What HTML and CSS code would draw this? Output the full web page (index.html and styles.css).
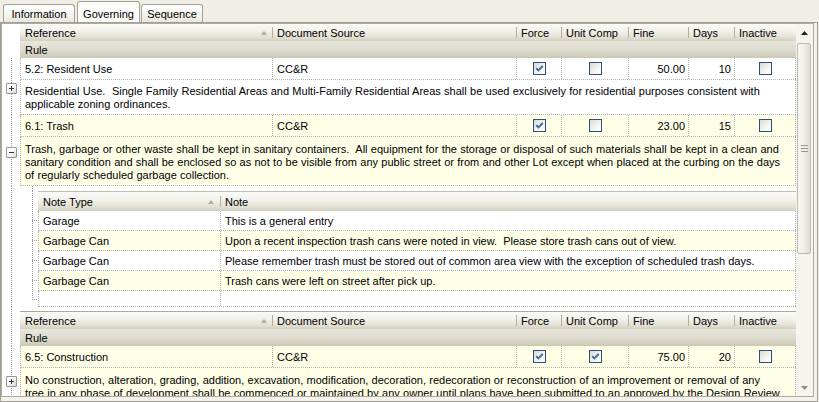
FILE: index.html
```html
<!DOCTYPE html>
<html lang="en">
<head>
<meta charset="utf-8">
<title>Governing</title>
<link rel="stylesheet" href="styles.css">
</head>
<body>
<div class="tabs">
  <div class="tab t-info">Information</div>
  <div class="tab t-gov">Governing</div>
  <div class="tab t-seq">Sequence</div>
</div>
<div class="panel">
  <div class="grid">
    <div class="gbody">

      <div class="line">
        <div class="gut blank"></div>
        <div class="hdr cols">
          <div class="hc first"><span>Reference</span><span class="sortup"></span></div>
          <div class="hc">Document Source</div>
          <div class="hc">Force</div>
          <div class="hc">Unit Comp</div>
          <div class="hc">Fine</div>
          <div class="hc">Days</div>
          <div class="hc last">Inactive</div>
        </div>
      </div>
      <div class="line">
        <div class="gut blank"></div>
        <div class="rule">Rule</div>
      </div>
      <div class="line">
        <div class="gut"></div>
        <div class="cells cols">
          <div class="c">5.2: Resident Use</div>
          <div class="c">CC&amp;R</div>
          <div class="c ctr"><span class="chk"><svg width="9" height="9" viewBox="0 0 9 9"><path d="M1.2 4.2 L3.4 6.4 L7.8 2" fill="none" stroke="#3a6cae" stroke-width="1.9"/></svg></span></div>
          <div class="c ctr"><span class="chk"></span></div>
          <div class="c num">50.00</div>
          <div class="c num">10</div>
          <div class="c ctr"><span class="chk"></span></div>
        </div>
      </div>
      <div class="line">
        <div class="gut"><span class="exp e1"><svg width="9" height="9" viewBox="0 0 9 9"><path d="M2 4.5h5M4.5 2v5" stroke="#333" stroke-width="1"/></svg></span></div>
        <div class="desc d1">Residential Use.&nbsp; Single Family Residential Areas and Multi-Family Residential Areas shall be used exclusively for residential purposes consistent with applicable zoning ordinances.</div>
      </div>
      <div class="line">
        <div class="gut"></div>
        <div class="cells cols alt">
          <div class="c">6.1: Trash</div>
          <div class="c">CC&amp;R</div>
          <div class="c ctr"><span class="chk"><svg width="9" height="9" viewBox="0 0 9 9"><path d="M1.2 4.2 L3.4 6.4 L7.8 2" fill="none" stroke="#3a6cae" stroke-width="1.9"/></svg></span></div>
          <div class="c ctr"><span class="chk"></span></div>
          <div class="c num">23.00</div>
          <div class="c num">15</div>
          <div class="c ctr"><span class="chk"></span></div>
        </div>
      </div>
      <div class="line">
        <div class="gut"><span class="exp"><svg width="9" height="9" viewBox="0 0 9 9"><path d="M2 4.5h5" stroke="#333" stroke-width="1"/></svg></span></div>
        <div class="desc alt">Trash, garbage or other waste shall be kept in sanitary containers.&nbsp; All equipment for the storage or disposal of such materials shall be kept in a clean and sanitary condition and shall be enclosed so as not to be visible from any public street or from and other Lot except when placed at the curbing on the days of regularly scheduled garbage collection.</div>
      </div>
      <div class="line">
        <div class="gut"></div>
        <div class="nest">
          <div class="nrow ntop"><div class="ngut"></div></div>
          <div class="nrow">
            <div class="ngut"></div>
            <div class="nhdr">
              <div class="hc first nfirst"><span>Note Type</span><span class="sortup"></span></div>
              <div class="hc last">Note</div>
            </div>
          </div>
          <div class="nrow">
            <div class="ngut tick"></div>
            <div class="ncells"><div class="c">Garage</div><div class="c">This is a general entry</div></div>
          </div>
          <div class="nrow">
            <div class="ngut tick"></div>
            <div class="ncells alt"><div class="c">Garbage Can</div><div class="c">Upon a recent inspection trash cans were noted in view.&nbsp; Please store trash cans out of view.</div></div>
          </div>
          <div class="nrow">
            <div class="ngut tick"></div>
            <div class="ncells"><div class="c">Garbage Can</div><div class="c">Please remember trash must be stored out of common area view with the exception of scheduled trash days.</div></div>
          </div>
          <div class="nrow">
            <div class="ngut tick"></div>
            <div class="ncells alt"><div class="c">Garbage Can</div><div class="c">Trash cans were left on street after pick up.</div></div>
          </div>
          <div class="nrow">
            <div class="ngut end"></div>
            <div class="ncells empty"><div class="c"></div><div class="c"></div></div>
          </div>
        </div>
      </div>
      <div class="line gap"><div class="gut"></div></div>

      <div class="line">
        <div class="gut"></div>
        <div class="hdr cols top">
          <div class="hc first"><span>Reference</span><span class="sortup"></span></div>
          <div class="hc">Document Source</div>
          <div class="hc">Force</div>
          <div class="hc">Unit Comp</div>
          <div class="hc">Fine</div>
          <div class="hc">Days</div>
          <div class="hc last">Inactive</div>
        </div>
      </div>
      <div class="line">
        <div class="gut"></div>
        <div class="rule">Rule</div>
      </div>
      <div class="line">
        <div class="gut"></div>
        <div class="cells cols alt">
          <div class="c">6.5: Construction</div>
          <div class="c">CC&amp;R</div>
          <div class="c ctr"><span class="chk"><svg width="9" height="9" viewBox="0 0 9 9"><path d="M1.2 4.2 L3.4 6.4 L7.8 2" fill="none" stroke="#3a6cae" stroke-width="1.9"/></svg></span></div>
          <div class="c ctr"><span class="chk"><svg width="9" height="9" viewBox="0 0 9 9"><path d="M1.2 4.2 L3.4 6.4 L7.8 2" fill="none" stroke="#3a6cae" stroke-width="1.9"/></svg></span></div>
          <div class="c num">75.00</div>
          <div class="c num">20</div>
          <div class="c ctr"><span class="chk"></span></div>
        </div>
      </div>
      <div class="line">
        <div class="gut"><span class="exp e3"><svg width="9" height="9" viewBox="0 0 9 9"><path d="M2 4.5h5M4.5 2v5" stroke="#333" stroke-width="1"/></svg></span></div>
        <div class="desc alt">No construction, alteration, grading, addition, excavation, modification, decoration, redecoration or reconstruction of an improvement or removal of any tree in any phase of development shall be commenced or maintained by any owner until plans have been submitted to an approved by the Design Review Committee.</div>
      </div>

    </div>
    <div class="vscroll">
      <div class="sbtn up"><svg width="7" height="4" viewBox="0 0 7 4"><path d="M0 4 L3.5 0 L7 4Z" fill="#222"/></svg></div>
      <div class="strack"><div class="thumb"><span class="grip"></span></div></div>
      <div class="sbtn"><svg width="7" height="4" viewBox="0 0 7 4"><path d="M0 0 L3.5 4 L7 0Z" fill="#8e8c82"/></svg></div>
    </div>
  </div>
</div>
</body>
</html>
```

FILE: styles.css
```css
* { box-sizing: border-box; margin: 0; padding: 0; }
html, body { width: 819px; height: 402px; overflow: hidden; }
body {
  background: #f0eee6;
  font-family: "Liberation Sans", Arial, sans-serif;
  font-size: 11px;
  line-height: 13px;
  color: #000;
}

/* tabs */
.tabs { display: flex; align-items: flex-end; height: 22px; padding-left: 3px; }
.tab {
  height: 18px;
  padding-top: 1px;
  border: 1px solid #a4a296;
  border-bottom: none;
  border-radius: 3px 3px 0 0;
  background: linear-gradient(#ffffff, #f6f5f1 50%, #e9e7de);
  display: flex; align-items: center; justify-content: center;
  white-space: nowrap;
}
.t-info { width: 72px; }
.t-gov { width: 63px; height: 21px; margin-left: 2px; padding-top: 4px; background: #fbfbf9; }
.t-seq { width: 62px; margin-left: 1px; }

/* panel + grid frame */
.panel {
  width: 818px; height: 380px;
  border: 1px solid #a19f93;
  padding: 0 3px 4px 0;
  background: #f3f2ec;
}
.grid { height: 100%; border: 1px solid #aeab9e; display: flex; background: #fff; }
.gbody { width: 794px; flex: none; overflow: hidden; display: flex; flex-direction: column; background: #fff; }

.line { display: flex; flex: none; }
.gap { height: 4px; }
.gut {
  width: 18px; flex: none; display: block;
  background: repeating-linear-gradient(#9c9c9c 0 1px, transparent 1px 2px) 9px 0 / 1px 100% no-repeat;
}
.gut.blank { background: none; }

/* headers */
.hdr {
  width: 776px; height: 17px;
  display: grid;
  grid-template-columns: 253px 244px 45px 67px 60px 46px 61px;
  background: linear-gradient(#fbfbf8 0%, #f2f1eb 40%, #e4e2d6 75%, #d3d0be 100%);
}
.hdr.top { height: 18px; border-top: 1px solid #aaa796; }
.hc {
  display: flex; align-items: center;
  padding-left: 4px; padding-top: 2px;
  white-space: nowrap; overflow: hidden;
  background: linear-gradient(#b2af9d, #b2af9d) right center / 1px 11px no-repeat;
}
.hc.first { padding-left: 5px; padding-right: 6px; justify-content: space-between; }
.hc.last { background: none; }
.sortup {
  width: 0; height: 0;
  margin-top: -2px;
  border-left: 3px solid transparent;
  border-right: 3px solid transparent;
  border-bottom: 4px solid #b0ad9e;
}
.rule {
  width: 776px; height: 17px;
  padding-left: 5px; padding-top: 2px;
  display: flex; align-items: center;
  background: linear-gradient(#e8e7de 0%, #dedccf 50%, #cbc8b4 100%);
}

/* data rows */
.cells {
  width: 776px; height: 22px;
  display: grid;
  grid-template-columns: 252px 244px 45px 67px 60px 46px 61px;
  border-left: 1px dotted #b3b3b3;
  border-bottom: 1px dotted #b3b3b3;
}
.alt { background: #ffffe8; }
.c {
  border-right: 1px dotted #b3b3b3;
  display: flex; align-items: center;
  padding-left: 4px; padding-top: 2px;
  white-space: nowrap; overflow: hidden;
}
.ctr { justify-content: center; padding-left: 0; padding-top: 0; }
.num { justify-content: flex-end; padding-left: 0; padding-right: 3px; }
.chk {
  width: 13px; height: 13px;
  border: 1px solid #2a4f78;
  background: linear-gradient(135deg, #dcdcd4, #f4f4f0 60%, #ffffff);
  display: flex; align-items: center; justify-content: center;
}

.desc {
  width: 776px;
  border-left: 1px dotted #b3b3b3;
  border-right: 1px dotted #b3b3b3;
  border-bottom: 1px dotted #b3b3b3;
  padding: 6px 14px 3px 4px;
  word-spacing: 0.25px;
}
.desc.d1 { padding-top: 5px; padding-bottom: 3px; }

.exp {
  display: flex; align-items: center; justify-content: center;
  width: 11px; height: 11px;
  margin: 10px 0 0 4px;
  border: 1px solid #959595;
  border-radius: 1px;
  background: linear-gradient(135deg, #ffffff 35%, #dad8ce);
}
.exp.e1 { margin-top: 3px; }
.exp.e3 { margin-top: 8px; }

/* nested band */
.nest { width: 776px; display: flex; flex-direction: column; }
.nrow { display: flex; }
.ntop { height: 5px; }
.ngut {
  width: 18px; flex: none;
  background: repeating-linear-gradient(#9c9c9c 0 1px, transparent 1px 2px) 12px 0 / 1px 100% no-repeat;
}
.ngut.tick {
  background:
    repeating-linear-gradient(#9c9c9c 0 1px, transparent 1px 2px) 12px 0 / 1px 100% no-repeat,
    repeating-linear-gradient(90deg, #9c9c9c 0 1px, transparent 1px 2px) 12px 9px / 6px 1px no-repeat;
}
.ngut.end {
  background:
    repeating-linear-gradient(#9c9c9c 0 1px, transparent 1px 2px) 12px 0 / 1px 8px no-repeat,
    repeating-linear-gradient(90deg, #9c9c9c 0 1px, transparent 1px 2px) 12px 8px / 6px 1px no-repeat;
}
.nhdr {
  width: 758px; height: 20px;
  display: grid;
  grid-template-columns: 183px 575px;
  border-top: 1px solid #c3c0b1;
  background: linear-gradient(#fbfbf8 0%, #f2f1eb 40%, #e4e2d6 75%, #d3d0be 100%);
}
.nhdr .nfirst { padding-left: 5px; padding-right: 7px; }
.ncells {
  width: 758px; height: 20px;
  display: grid;
  grid-template-columns: 182px 575px;
  border-left: 1px dotted #b3b3b3;
  border-bottom: 1px dotted #b3b3b3;
}
.ncells.empty { height: 16px; }

/* scrollbar */
.vscroll { width: 17px; flex: none; display: flex; flex-direction: column; background: #f5f4ef; }
.sbtn { height: 17px; flex: none; display: flex; align-items: center; justify-content: center; }
.sbtn.up { padding-top: 1px; }
.strack { flex: 1; padding: 2px 2px 0 1px; }
.thumb {
  height: 211px;
  border: 1px solid #bdbbb0;
  border-radius: 2px;
  background: linear-gradient(90deg, #f8f7f3, #efeee8 50%, #dfddd3);
  display: flex; align-items: center; justify-content: center;
}
.grip {
  width: 7px; height: 7px;
  background: repeating-linear-gradient(#9a9889 0 1px, transparent 1px 3px);
}
```
